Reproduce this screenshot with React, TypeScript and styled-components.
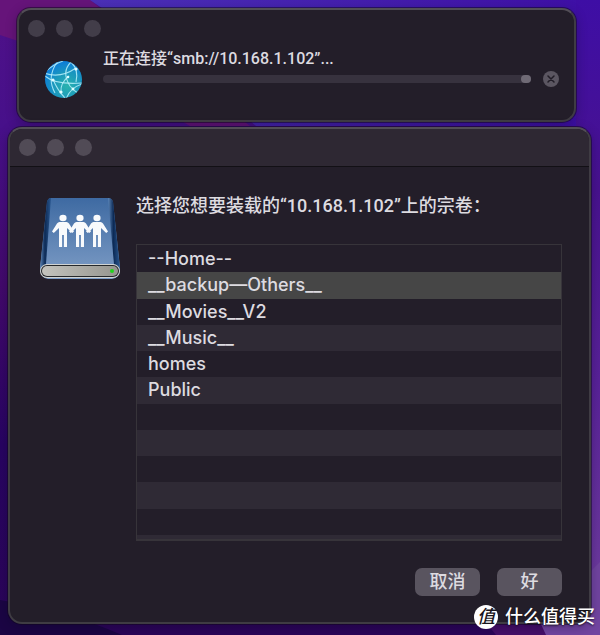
import React, { useState } from "react";
import styled, { createGlobalStyle } from "styled-components";

const GlobalStyle = createGlobalStyle`
  * { box-sizing: border-box; }
  body {
    margin: 0;
    background: #2b0560;
    color: #dddbe0;
    font-family: Inter, "Noto Sans CJK SC", sans-serif;
    font-weight: 500;
  }
  button { font: inherit; color: inherit; border: 0; padding: 0; }
`;

const Desktop = styled.main`
  position: relative;
  isolation: isolate;
  overflow: hidden;
  min-height: 100vh;
  padding: 8px 8px 11px;
  display: flex;
  flex-direction: column;
  gap: 5px;
`;

const Wallpaper = styled.svg`
  position: absolute;
  inset: 0;
  z-index: -1;
  width: 100%;
  height: 100%;
`;

const Panel = styled.section`
  background: #231e29;
  border: 2px solid #3f3c43;
  border-top-color: #524e56;
  border-radius: 14px;
  box-shadow: 0 0 0 1px rgba(16, 6, 28, 0.5), 0 3px 12px rgba(10, 0, 30, 0.3);
  overflow: hidden;
`;

const ProgressPanel = styled(Panel)`
  margin: 0 16px 0 9px;
  height: 114px;
`;

const VolumePanel = styled(Panel)`
  margin-right: 1px;
  flex: 1;
  display: flex;
  flex-direction: column;
`;

const TitleBar = styled.header<{ $raised?: boolean }>`
  display: flex;
  align-items: center;
  gap: 11px;
  padding: 0 9px;
  height: ${(p) => (p.$raised ? 38 : 36)}px;
  background: ${(p) => (p.$raised ? "#2e2833" : "transparent")};
  border-bottom: ${(p) => (p.$raised ? "1px solid #121015" : "0")};
  flex-shrink: 0;
`;

const WindowButton = styled.button<{ $bright?: boolean }>`
  width: 17px;
  height: 17px;
  border-radius: 50%;
  background: ${(p) => (p.$bright ? "#514b56" : "#423d49")};
`;

const ProgressBody = styled.div`
  display: flex;
  padding: 0 15px 0 25px;
  gap: 20px;
`;

const GlobeIcon = styled.svg`
  width: 39px;
  height: 39px;
  margin-top: 14px;
  flex-shrink: 0;
`;

const ProgressInfo = styled.div`
  flex: 1;
  min-width: 0;
`;

const StatusText = styled.p`
  margin: 1px 0 0;
  font-family: Roboto, "Noto Sans CJK SC", sans-serif;
  font-size: 16px;
  line-height: 24px;
  white-space: nowrap;
`;

const ProgressLine = styled.div`
  display: flex;
  align-items: center;
  gap: 12px;
  height: 16px;
`;

const Track = styled.div`
  flex: 1;
  height: 8px;
  border-radius: 4px;
  background: #37323e;
  display: flex;
  justify-content: flex-end;
`;

const Thumb = styled.span`
  width: 10px;
  height: 8px;
  border-radius: 4px;
  background: #6f6a75;
`;

const StopButton = styled.button`
  display: flex;
  width: 16px;
  height: 16px;
  border-radius: 50%;
  background: #5b5661;
`;

const VolumeBody = styled.div`
  flex: 1;
  display: grid;
  grid-template-columns: 82px 1fr;
  column-gap: 15px;
  padding: 25px 27px 26px 29px;
`;

const DriveIcon = styled.svg`
  width: 82px;
  height: 84px;
  margin-top: 5px;
`;

const VolumeContent = styled.div`
  min-width: 0;
  display: flex;
  flex-direction: column;
`;

const Heading = styled.h1`
  margin: 0 0 24px;
  font-family: Roboto, "Noto Sans CJK SC", sans-serif;
  font-size: 18px;
  font-weight: 500;
  line-height: 28px;
  white-space: nowrap;
`;

const ListFrame = styled.div`
  flex: 1;
  display: flex;
  flex-direction: column;
  border: 1px solid #37343a;
  border-bottom-width: 2px;
  padding-top: 1px;

  &::after {
    content: "";
    height: 4px;
    background: #2f2a35;
  }
`;

const VolumeList = styled.div`
  flex: 1;
  display: grid;
  grid-auto-rows: 1fr;
`;

const VolumeRow = styled.button<{ $selected: boolean }>`
  padding: 0 11px;
  text-align: left;
  font-size: 18px;
  line-height: 26px;
  white-space: pre;
  background: ${(p) => (p.$selected ? "#464646" : "transparent")};

  &:nth-child(even) {
    background: ${(p) => (p.$selected ? "#464646" : "#2f2a35")};
  }
`;

const EmptyRow = styled.span`
  &:nth-child(even) { background: #2f2a35; }
`;

const Actions = styled.footer`
  display: flex;
  justify-content: flex-end;
  gap: 17px;
  margin-top: 27px;
`;

const ActionButton = styled.button`
  width: 65px;
  height: 28px;
  border-radius: 7px;
  background: #59545f;
  font-size: 18px;
  line-height: 26px;
`;

const Watermark = styled.div`
  position: absolute;
  right: 5px;
  bottom: 5px;
  display: flex;
  align-items: center;
  gap: 7px;
  color: #fff;
  font-size: 18px;
  line-height: 26px;
  text-shadow: 0 1px 2px rgba(0, 0, 0, 0.7);
`;

const Seal = styled.span`
  width: 24px;
  height: 24px;
  border-radius: 50%;
  background: #fff;
  color: #19151c;
  font-size: 18px;
  font-style: italic;
  line-height: 23px;
  text-align: center;
  text-shadow: none;
`;

const WINDOW_ACTIONS = ["关闭", "最小化", "缩放"];
const VOLUMES = ["--Home--", "__backup—Others__", "__Movies__V2", "__Music__", "homes", "Public"];
const EMPTY_ROWS = [0, 1, 2, 3, 4];

function WindowButtons({ bright }: { bright?: boolean }) {
  return (
    <>
      {WINDOW_ACTIONS.map((name) => (
        <WindowButton key={name} type="button" aria-label={name} $bright={bright} />
      ))}
    </>
  );
}

function Background() {
  return (
    <Wallpaper viewBox="0 0 600 635" preserveAspectRatio="none" aria-hidden="true">
      <defs>
        <linearGradient id="wall" x1="0" y1="0" x2="0" y2="1">
          <stop offset="0" stopColor="#4e1188" />
          <stop offset="0.2" stopColor="#47108a" />
          <stop offset="0.45" stopColor="#43096c" />
          <stop offset="0.7" stopColor="#280462" />
          <stop offset="1" stopColor="#2b0558" />
        </linearGradient>
        <linearGradient id="blue" x1="0" y1="0" x2="1" y2="0">
          <stop offset="0" stopColor="#4b30b8" />
          <stop offset="1" stopColor="#3e0ea5" />
        </linearGradient>
        <linearGradient id="right" x1="0" y1="0" x2="0" y2="1">
          <stop offset="0" stopColor="#3e0ea5" />
          <stop offset="0.3" stopColor="#48128f" />
          <stop offset="0.6" stopColor="#592299" />
          <stop offset="1" stopColor="#71409f" />
        </linearGradient>
      </defs>
      <path fill="url(#wall)" d="M0 0h600v635H0z" />
      <path fill="#66147a" d="M0 0h90l160 126h-60Q80 60 0 35z" />
      <path fill="url(#blue)" d="M90 0h510v126H256Q180 60 90 0z" />
      <path fill="url(#right)" d="M576 0h24v635h-60l36-80z" />
      <path fill="#1b0544" d="M0 600q70 12 122 35H0z" />
      <path fill="#450e69" d="M480 615l100-20v40h-84z" />
      <path fill="#7144a0" d="M540 622l60-60v73h-54z" />
    </Wallpaper>
  );
}

function Globe() {
  return (
    <GlobeIcon viewBox="0 0 39 39" aria-hidden="true">
      <defs>
        <radialGradient id="sea" cx="0.6" cy="0.68" r="0.68">
          <stop offset="0" stopColor="#2ab3ae" />
          <stop offset="0.55" stopColor="#1a97bd" />
          <stop offset="1" stopColor="#0c7cd9" />
        </radialGradient>
        <clipPath id="disc"><circle cx="19.5" cy="19.5" r="18.5" /></clipPath>
      </defs>
      <circle cx="19.5" cy="19.5" r="18.5" fill="url(#sea)" />
      <g clipPath="url(#disc)" fill="none" stroke="#b6f0fa" strokeOpacity="0.85" strokeWidth="1.1">
        <path d="M0 13q16 6 32-5" />
        <path d="M1 16q10 9 37 7" />
        <path d="M14 1Q2 17 11 33" />
        <path d="M27 2Q17 12 26 26q4 5 8 7" />
        <path d="M27 2q8 8 5 20" />
        <path d="M9 19q4 11 13 20" />
        <path d="M25 16q-9 7-8 16" />
        <path d="M38 24q-12 4-16 15" />
        <path d="M1 12Q10 4 19 1" />
      </g>
      <g fill="#dffcff">
        <circle cx="9" cy="20" r="1.6" />
        <circle cx="32" cy="9" r="1.6" />
        <circle cx="24" cy="17" r="1.3" />
        <circle cx="17" cy="32" r="1.6" />
        <circle cx="29" cy="29" r="1.4" />
      </g>
    </GlobeIcon>
  );
}

function Person({ x }: { x: number }) {
  return (
    <g transform={`translate(${x} 1)`}>
      <ellipse cx="0" cy="20" rx="3.6" ry="3.2" />
      <path d="M-3.5 24h7q1.500 0 2.500 1.500L11 33.500l-1.800 1.500L4 30v19H.9V37H-.9v12H-4V30l-5.200 5-1.800-1.500 5-8q1-1.500 2.500-1.500z" />
    </g>
  );
}

function Drive() {
  return (
    <DriveIcon viewBox="0 0 82 84" aria-hidden="true">
      <defs>
        <linearGradient id="cover" x1="0" y1="0" x2="0" y2="1">
          <stop offset="0" stopColor="#3e6aa2" />
          <stop offset="1" stopColor="#7e9dc6" />
        </linearGradient>
        <linearGradient id="edge" x1="0" y1="0" x2="1" y2="0">
          <stop offset="0" stopColor="#5c86b8" />
          <stop offset="0.45" stopColor="#0c2a55" />
          <stop offset="1" stopColor="#29578f" />
        </linearGradient>
        <linearGradient id="metal" x1="0" y1="0" x2="1" y2="0">
          <stop offset="0" stopColor="#c3c3bd" />
          <stop offset="1" stopColor="#96958f" />
        </linearGradient>
      </defs>
      <path d="M12 1h57q4 0 5 4l7 66q0 10-8 11H9q-8-1-8-11L8 5q1-4 4-4z" fill="url(#cover)" />
      <path d="M12 1L7 67l-6 5L8 5q1-4 4-4z" fill="url(#edge)" />
      <path d="M69 1q4 0 5 4l7 67-6-5z" fill="url(#edge)" />
      <rect x="1" y="67" width="80" height="14" rx="7" fill="#d0d3d2" />
      <rect x="2" y="68" width="78" height="12" rx="6" fill="#25282b" />
      <rect x="3" y="69" width="76" height="10" rx="5" fill="url(#metal)" />
      <circle cx="73" cy="74" r="2" fill="#23d21d" />
      <g fill="#f8fafc"><Person x={24} /><Person x={41} /><Person x={58} /></g>
    </DriveIcon>
  );
}

export default function App() {
  const [selected, setSelected] = useState("__backup—Others__");

  return (
    <>
      <GlobalStyle />
      <Desktop>
        <Background />
        <ProgressPanel aria-label="正在连接">
          <TitleBar><WindowButtons /></TitleBar>
          <ProgressBody>
            <Globe />
            <ProgressInfo>
              <StatusText>正在连接“smb://10.168.1.102”...</StatusText>
              <ProgressLine>
                <Track role="progressbar" aria-label="正在连接"><Thumb /></Track>
                <StopButton type="button" aria-label="停止">
                  <svg width="16" height="16" viewBox="0 0 16 16" stroke="#211d27" strokeWidth="1.5" strokeLinecap="round" aria-hidden="true">
                    <path d="M5 5l6 6M11 5l-6 6" />
                  </svg>
                </StopButton>
              </ProgressLine>
            </ProgressInfo>
          </ProgressBody>
        </ProgressPanel>
        <VolumePanel aria-labelledby="volume-heading">
          <TitleBar $raised><WindowButtons bright /></TitleBar>
          <VolumeBody>
            <Drive />
            <VolumeContent>
              <Heading id="volume-heading">选择您想要装载的“10.168.1.102”上的宗卷：</Heading>
              <ListFrame>
                <VolumeList role="listbox" aria-labelledby="volume-heading">
                  {VOLUMES.map((name) => (
                    <VolumeRow
                      key={name}
                      type="button"
                      role="option"
                      aria-selected={name === selected}
                      $selected={name === selected}
                      onClick={() => setSelected(name)}
                    >
                      {name}
                    </VolumeRow>
                  ))}
                  {EMPTY_ROWS.map((row) => <EmptyRow key={row} aria-hidden="true" />)}
                </VolumeList>
              </ListFrame>
              <Actions>
                <ActionButton type="button">取消</ActionButton>
                <ActionButton type="button">好</ActionButton>
              </Actions>
            </VolumeContent>
          </VolumeBody>
        </VolumePanel>
        <Watermark><Seal>值</Seal>什么值得买</Watermark>
      </Desktop>
    </>
  );
}
